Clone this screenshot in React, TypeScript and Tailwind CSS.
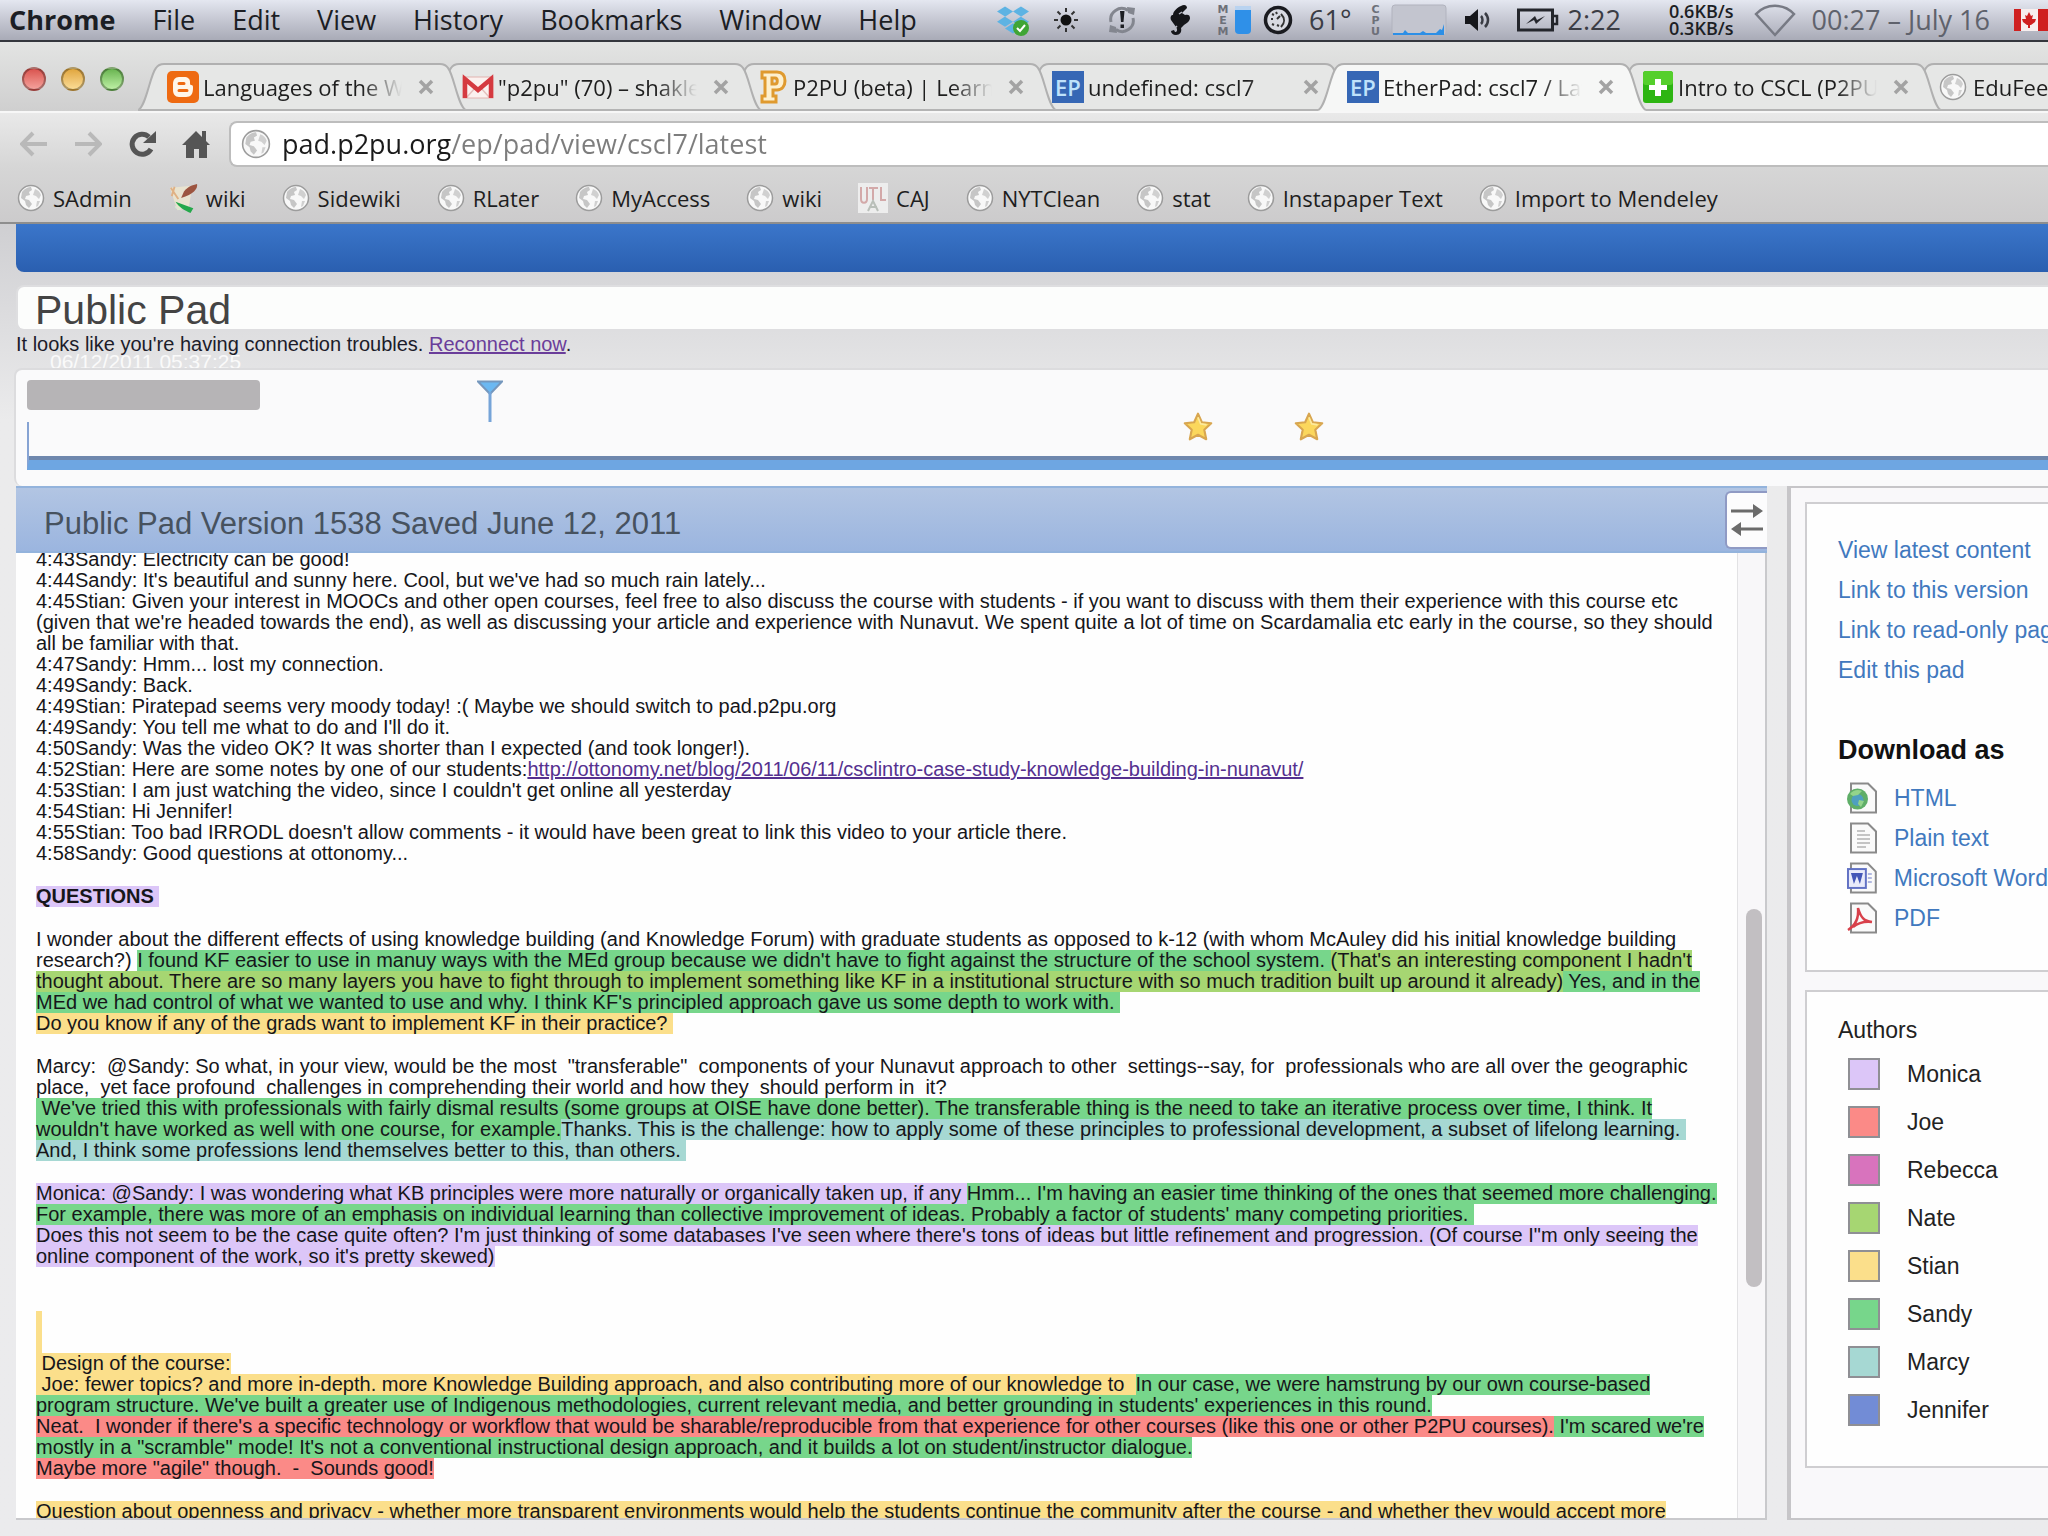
import type { ReactNode } from 'react'
import clsx from 'clsx'
import { FaDropbox } from 'react-icons/fa'

type Author = 'monica' | 'joe' | 'rebecca' | 'nate' | 'stian' | 'sandy' | 'marcy' | 'jennifer'

interface Run {
  text: string
  author?: Author
  bold?: boolean
  href?: string
}

const authorColor: Record<Author, string> = {
  monica: 'bg-[#dcc6f8]',
  joe: 'bg-[#fb8a87]',
  rebecca: 'bg-[#d873bd]',
  nate: 'bg-[#a6d672]',
  stian: 'bg-[#fbdf8b]',
  sandy: 'bg-[#77d68b]',
  marcy: 'bg-[#a6d8d3]',
  jennifer: 'bg-[#728cd6]',
}

const authors: { id: Author; name: string }[] = [
  { id: 'monica', name: 'Monica' },
  { id: 'joe', name: 'Joe' },
  { id: 'rebecca', name: 'Rebecca' },
  { id: 'nate', name: 'Nate' },
  { id: 'stian', name: 'Stian' },
  { id: 'sandy', name: 'Sandy' },
  { id: 'marcy', name: 'Marcy' },
  { id: 'jennifer', name: 'Jennifer' },
]

const plain = (text: string): Run[] => [{ text }]
const by = (author: Author, text: string): Run => ({ text, author })

const padLines: Run[][] = [
  plain('4:43Sandy: Electricity can be good!'),
  plain("4:44Sandy: It's beautiful and sunny here. Cool, but we've had so much rain lately..."),
  plain(
    '4:45Stian: Given your interest in MOOCs and other open courses, feel free to also discuss the course with students - if you want to discuss with them their experience with this course etc',
  ),
  plain(
    "(given that we're headed towards the end), as well as discussing your article and experience with Nunavut. We spent quite a lot of time on Scardamalia etc early in the course, so they should",
  ),
  plain('all be familiar with that.'),
  plain('4:47Sandy: Hmm... lost my connection.'),
  plain('4:49Sandy: Back.'),
  plain('4:49Stian: Piratepad seems very moody today! :( Maybe we should switch to pad.p2pu.org'),
  plain("4:49Sandy: You tell me what to do and I'll do it."),
  plain('4:50Sandy: Was the video OK? It was shorter than I expected (and took longer!).'),
  [
    { text: '4:52Stian: Here are some notes by one of our students:' },
    {
      text: 'http://ottonomy.net/blog/2011/06/11/csclintro-case-study-knowledge-building-in-nunavut/',
      href: 'http://ottonomy.net/blog/2011/06/11/csclintro-case-study-knowledge-building-in-nunavut/',
    },
  ],
  plain("4:53Stian: I am just watching the video, since I couldn't get online all yesterday"),
  plain('4:54Stian: Hi Jennifer!'),
  plain("4:55Stian: Too bad IRRODL doesn't allow comments - it would have been great to link this video to your article there."),
  plain('4:58Sandy: Good questions at ottonomy...'),
  [],
  [{ text: 'QUESTIONS ', author: 'monica', bold: true }],
  [],
  plain(
    'I wonder about the different effects of using knowledge building (and Knowledge Forum) with graduate students as opposed to k-12 (with whom McAuley did his initial knowledge building',
  ),
  [
    { text: 'research?) ' },
    by('sandy', "I found KF easier to use in manuy ways with the MEd group because we didn't have to fight against the structure of the school system. "),
    by('nate', "(That's an interesting component I hadn't"),
  ],
  [
    by('nate', 'thought about. There are so many layers you have to fight through to implement something like KF in a institutional structure with so much tradition built up around it already)'),
    by('sandy', ' Yes, and in the'),
  ],
  [by('sandy', "MEd we had control of what we wanted to use and why. I think KF's principled approach gave us some depth to work with. ")],
  [by('stian', 'Do you know if any of the grads want to implement KF in their practice? ')],
  [],
  plain(
    'Marcy:  @Sandy: So what, in your view, would be the most  "transferable"  components of your Nunavut approach to other  settings--say, for  professionals who are all over the geographic',
  ),
  plain('place,  yet face profound  challenges in comprehending their world and how they  should perform in  it?'),
  [
    by('sandy', " We've tried this with professionals with fairly dismal results (some groups at OISE have done better). The transferable thing is the need to take an iterative process over time, I think. It"),
  ],
  [
    by('sandy', "wouldn't have worked as well with one course, for example."),
    by('marcy', 'Thanks. This is the challenge: how to apply some of these principles to professional development, a subset of lifelong learning. '),
  ],
  [by('marcy', 'And, I think some professions lend themselves better to this, than others. ')],
  [],
  [
    by('monica', 'Monica: @Sandy: I was wondering what KB principles were more naturally or organically taken up, if any '),
    by('sandy', "Hmm... I'm having an easier time thinking of the ones that seemed more challenging."),
  ],
  [by('sandy', "For example, there was more of an emphasis on individual learning than collective improvement of ideas. Probably a factor of students' many competing priorities. ")],
  [by('monica', "Does this not seem to be the case quite often? I'm just thinking of some databases I've seen where there's tons of ideas but little refinement and progression. (Of course I\"m only seeing the")],
  [by('monica', "online component of the work, so it's pretty skewed)")],
  [],
  [],
  [by('stian', ' ')],
  [by('stian', ' ')],
  [by('stian', ' Design of the course:')],
  [
    by('stian', ' Joe: fewer topics? and more in-depth. more Knowledge Building approach, and also contributing more of our knowledge to  '),
    by('sandy', 'In our case, we were hamstrung by our own course-based'),
  ],
  [by('sandy', "program structure. We've built a greater use of Indigenous methodologies, current relevant media, and better grounding in students' experiences in this round.")],
  [
    by('joe', "Neat.  I wonder if there's a specific technology or workflow that would be sharable/reproducible from that experience for other courses (like this one or other P2PU courses)."),
    by('sandy', " I'm scared we're"),
  ],
  [by('sandy', 'mostly in a "scramble" mode! It\'s not a conventional instructional design approach, and it builds a lot on student/instructor dialogue.')],
  [by('joe', 'Maybe more "agile" though.  -  Sounds good!')],
  [],
  [by('stian', 'Question about openness and privacy - whether more transparent environments would help the students continue the community after the course - and whether they would accept more')],
]

/* ---------- icons ---------- */

const Globe = ({ className = 'size-7' }: { className?: string }) => (
  <svg viewBox="0 0 28 28" className={clsx('shrink-0', className)} aria-hidden="true">
    <circle cx="14" cy="14" r="12.5" fill="#f8f8f8" stroke="#9c9c9c" strokeWidth="1.500" />
    <path d="M5 8c3-4 7-5 9-5l1 3-3 2 1 3-4 1-1 3 4 1 3 4-3 4-3-3-1-4-4-3z" fill="#c6c6c6" />
    <path d="M18 5c3 1 5 3 6 6l-2 4-3-3-3-1zM20 17l3 0-2 5-2 1z" fill="#d0d0d0" />
  </svg>
)

const Star = () => (
  <svg viewBox="0 0 30 30" className="size-8" aria-hidden="true">
    <path
      d="M15 2.5l3.600 8 8.800 1-6.500 6 1.800 9L15 22.300 7.300 26.500l1.800-9-6.500-6 8.800-1z"
      fill="#fbd75c"
      stroke="#d8a650"
      strokeWidth="2"
      strokeLinejoin="round"
    />
    <path d="M15 6l2.500 6 5.500 1" fill="none" stroke="#fdeaa0" strokeWidth="1.500" />
  </svg>
)

const SunIcon = () => (
  <svg viewBox="0 0 26 26" className="size-[26px]" aria-hidden="true">
    <circle cx="13" cy="13" r="5.500" fill="#111" />
    <path
      d="M13 1v4M13 21v4M1 13h4M21 13h4M4.500 4.500l3 3M18.500 18.500l3 3M21.500 4.500l-3 3M7.500 18.500l-3 3"
      stroke="#333"
      strokeWidth="2"
    />
  </svg>
)

const SyncAlert = () => (
  <svg viewBox="0 0 30 30" className="size-[30px]" aria-hidden="true">
    <path d="M4 17A11 11 0 0 1 21 5.500M26 13A11 11 0 0 1 9 24.500" fill="none" stroke="#83868f" strokeWidth="3" />
    <path d="M20 2l8 1-1 7-6-2zM10 28l-8-1 1-7 6 2z" fill="#83868f" />
    <path d="M13 6h4.500l-1 11h-2.500zM13.500 19.500h3.500v3.500h-3.500z" fill="#1d1f24" />
  </svg>
)

const ScrollIcon = () => (
  <svg viewBox="0 0 22 32" className="h-8 w-[22px]" aria-hidden="true">
    <path
      d="M12 2c3-2 6-1 6 2l-5 5 3 2c3-1 5 0 5 3s-3 5-6 7l-3 3c1 4-1 7-5 7-3 0-5-2-5-4l3-1 1 2c2 0 3-2 1-5l-5-7c-1-3 0-5 2-5 0-4 5-8 8-9z"
      fill="#15161a"
    />
    <path d="M5 25l3-3M10 10l3-2" stroke="#b9bbc6" strokeWidth="1.500" />
  </svg>
)

const Gauge = () => (
  <svg viewBox="0 0 30 30" className="size-[30px]" aria-hidden="true">
    <circle cx="15" cy="15" r="12.500" fill="#d8dae2" stroke="#1a1b20" strokeWidth="3.500" />
    <path d="M9 9l2 1M8 14h2M9 19l2 1M13 7l1 2M18 9c4 4 4 9 0 13" fill="none" stroke="#333" strokeWidth="2" />
    <path d="M14 14l3-3M14 20l2 1" stroke="#333" strokeWidth="2" />
  </svg>
)

const CpuGraph = () => (
  <svg viewBox="0 0 56 32" className="h-8 w-14" aria-hidden="true">
    <rect x="1" y="1" width="54" height="30" rx="3" fill="#c3c5cf" stroke="#b1b3be" />
    <path d="M2 31v-2h10l2-3 3 3h12l3-2 3 2h10l4-4 2 1 2-6v11z" fill="#2c8fe6" />
  </svg>
)

const Speaker = () => (
  <svg viewBox="0 0 30 26" className="h-[26px] w-[30px]" aria-hidden="true">
    <path d="M2 9h5l8-7v22l-8-7H2z" fill="#16171b" />
    <path d="M18 9c2 2 2 6 0 8M22 6c4 4 4 10 0 14" fill="none" stroke="#3a3c44" strokeWidth="2.500" />
  </svg>
)

const Battery = () => (
  <svg viewBox="0 0 42 24" className="h-6 w-[42px]" aria-hidden="true">
    <rect x="1.500" y="2" width="34" height="20" fill="none" stroke="#24262c" strokeWidth="3" />
    <path d="M36 8h4v8h-4" fill="none" stroke="#24262c" strokeWidth="2.500" />
    <path d="M9 16l9-8 2 4 8-4-9 8-2-4z" fill="#24262c" />
  </svg>
)

const Wifi = () => (
  <svg viewBox="0 0 42 34" className="h-[34px] w-[42px]" aria-hidden="true">
    <path d="M2 11C12 0 30 0 40 11L21 32z" fill="none" stroke="#777a84" strokeWidth="2.500" />
  </svg>
)

const Flag = () => (
  <svg viewBox="0 0 44 22" className="h-[22px] w-11" aria-hidden="true">
    <rect width="44" height="22" fill="#f7eeee" />
    <rect width="7" height="22" fill="#cf2020" />
    <rect x="24" width="20" height="22" fill="#cf2020" />
    <path d="M15 3l2 4 2-1-1 4 4 0-1 3-4 3h-1v3h-2v-3h-1l-4-3-1-3 4 0-1-4 2 1z" fill="#cf2020" />
  </svg>
)

const Blogger = () => (
  <svg viewBox="0 0 32 32" className="size-8" aria-hidden="true">
    <rect width="32" height="32" rx="5" fill="#ee6a12" />
    <path d="M12 6h5c4 0 6 2 6 5 0 2 0 3 1 3 2 0 2 1 2 3 0 6-2 9-7 9h-7c-4 0-6-3-6-7v-6c0-4 2-7 6-7z" fill="#fff6ea" />
    <path d="M12 12.500h5M12 19.500h8" stroke="#ee6a12" strokeWidth="3" strokeLinecap="round" />
  </svg>
)

const Gmail = () => (
  <svg viewBox="0 0 32 32" className="size-8" aria-hidden="true">
    <rect x="1" y="6" width="30" height="21" fill="#fbf1ef" stroke="#e2b4b0" />
    <path d="M5 26l8-9M27 26l-8-9" stroke="#e5c0bd" strokeWidth="1.500" />
    <path d="M3 27V8l13 11L29 8v19" fill="none" stroke="#d53a40" strokeWidth="4.500" />
  </svg>
)

const P2pu = () => (
  <svg viewBox="0 0 28 34" className="h-[34px] w-7" aria-hidden="true">
    <path
      d="M3 2h15c6 0 8 4 8 9s-3 9-8 9h-4v6h3v6H3v-6h3V8H3zM13 8v6h3c3 0 3-6 0-6z"
      fill="#fdf0cf"
      stroke="#df9a2f"
      strokeWidth="3"
      fillRule="evenodd"
    />
  </svg>
)

const EtherPad = () => (
  <span className="flex h-8 w-8 items-center justify-center bg-[#3667b5] text-[22px] leading-8 font-semibold text-[#bfe2fb]">
    EP
  </span>
)

const Plus = () => (
  <svg viewBox="0 0 30 32" className="h-8 w-[30px]" aria-hidden="true">
    <rect width="30" height="32" rx="3" fill="#2db512" />
    <rect width="30" height="14" rx="3" fill="#55cf2c" />
    <path d="M12 8h6v6h6v5h-6v6h-6v-6H6v-5h6z" fill="#fff" />
  </svg>
)

const WikiIcon = () => (
  <svg viewBox="0 0 32 32" className="h-8 w-[30px] shrink-0" aria-hidden="true">
    <path d="M2 5l24-2-4 24-12 2z" fill="#e9e3cf" />
    <path d="M3 5l8 12M7 4l-3 10" stroke="#e0b184" strokeWidth="2" />
    <path d="M31 1c1 5-4 11-17 15l3-7c4-5 9-7 14-8z" fill="#9c5440" />
    <path d="M8 20l19 7-3 5C17 29 12 26 8 20z" fill="#25a84b" />
    <path d="M7 24l9 6-8-3z" fill="#d8ead4" />
  </svg>
)

const CajIcon = () => (
  <svg viewBox="0 0 30 30" className="size-[30px] shrink-0" aria-hidden="true">
    <rect width="30" height="30" fill="#ededed" />
    <path d="M3 4v12c0 5 6 5 6 0V4M11 5h9M15 5v12M23 4v13h5" fill="none" stroke="#d3a9a9" strokeWidth="2" />
    <path d="M10 28l5-10 5 10M12 24h7" fill="none" stroke="#b9bfb9" strokeWidth="2" />
  </svg>
)

const Page = ({ children }: { children?: ReactNode }) => (
  <svg viewBox="0 0 32 32" className="size-8" aria-hidden="true">
    <path d="M5 1.500h17l8 8v21H5z" fill="#fafafa" stroke="#8a8a8a" strokeWidth="2" />
    {children}
  </svg>
)

const HtmlIcon = () => (
  <Page>
    <circle cx="11.500" cy="17" r="10.500" fill="#5fae68" />
    <circle cx="11.500" cy="18" r="6" fill="#4f9fc0" />
    <path d="M4 12c3-4 8-5 12-3l-4 4-5 1zM13 18l5 1-3 6-3-3z" fill="#93d48b" />
  </Page>
)

const TextIcon = () => (
  <Page>
    <path d="M11 9h8M11 13h13M11 17h13M11 21h13M11 25h9" stroke="#b3b3b3" strokeWidth="1.500" />
  </Page>
)

const WordIcon = () => (
  <Page>
    <rect x="2" y="7" width="18" height="19" fill="#e9ebfa" stroke="#6272c4" strokeWidth="2" />
    <path d="M5 11l3 11 3-8 3 8 3-11z" fill="#4457b8" />
    <path d="M22 12h4M22 16h4M22 20h4" stroke="#9aa4d8" strokeWidth="1.500" />
  </Page>
)

const PdfIcon = () => (
  <Page>
    <path d="M2 28c8-5 11-12 10-22 3 10 6 13 14 14-8-1-14 1-19 5" fill="none" stroke="#d8404a" strokeWidth="2.500" />
  </Page>
)

/* ---------- browser chrome ---------- */

const menus = ['File', 'Edit', 'View', 'History', 'Bookmarks', 'Window', 'Help']

const Stacked = ({ text }: { text: string }) => (
  <span className="flex w-4 flex-col items-center font-['DejaVu_Sans',sans-serif] text-[11px] leading-[11px] font-bold text-[#6d7079]">
    {text.split('').map((c, i) => (
      <span key={i}>{c}</span>
    ))}
  </span>
)

const MenuBar = () => (
  <header className="flex h-[42px] shrink-0 items-center overflow-hidden border-b-2 border-[#34363d] bg-linear-to-b from-[#e4e7f0] via-[#c5c7d2] to-[#a9abb7] text-[27px] leading-8 text-[#1c1e24]">
    <nav className="flex w-[997px] shrink-0 gap-[37px] pl-[9px]">
      <button className="font-bold">Chrome</button>
      {menus.map((m) => (
        <button key={m}>{m}</button>
      ))}
    </nav>
    <div className="flex shrink-0 items-center whitespace-nowrap">
      <span className="relative">
        <FaDropbox className="size-8 text-[#5db3e3]" />
        <svg viewBox="0 0 16 16" className="absolute right-0 bottom-0 size-4" aria-hidden="true">
          <circle cx="8" cy="8" r="8" fill="#3fa535" />
          <path d="M4 8l3 3 5-6" fill="none" stroke="#fff" strokeWidth="2" />
        </svg>
      </span>
      <span className="ml-6"><SunIcon /></span>
      <span className="ml-7"><SyncAlert /></span>
      <span className="ml-8"><ScrollIcon /></span>
      <span className="ml-6"><Stacked text="MEM" /></span>
      <span className="ml-1 h-7 w-4 rounded-b border-t-4 border-[#b9d3f0] bg-[#2f90e8]" />
      <span className="ml-3"><Gauge /></span>
      <span className="ml-4 text-[#3b3d45]">61°</span>
      <span className="ml-4"><Stacked text="CPU" /></span>
      <span className="ml-2"><CpuGraph /></span>
      <span className="ml-4"><Speaker /></span>
      <span className="ml-6"><Battery /></span>
      <span className="ml-2 text-[#3b3d45]">2:22</span>
      <span className="ml-12 flex flex-col text-[18px] leading-[17px] font-semibold">
        <span>0.6KB/s</span>
        <span>0.3KB/s</span>
      </span>
      <span className="ml-5"><Wifi /></span>
      <span className="ml-4 text-[#5f626c]">00:27 – July 16</span>
      <span className="ml-6"><Flag /></span>
    </div>
  </header>
)

const tabs: { title: string; icon: ReactNode; active?: boolean }[] = [
  { title: 'Languages of the W', icon: <Blogger /> },
  { title: '"p2pu" (70) – shakle', icon: <Gmail /> },
  { title: 'P2PU (beta) | Learnin', icon: <P2pu /> },
  { title: 'undefined: cscl7', icon: <EtherPad /> },
  { title: 'EtherPad: cscl7 / Lat', icon: <EtherPad />, active: true },
  { title: 'Intro to CSCL (P2PU', icon: <Plus /> },
  { title: 'EduFeedr', icon: <Globe /> },
]

const Tab = ({ title, icon, active, order }: { title: string; icon: ReactNode; active?: boolean; order: number }) => (
  <div className="relative -mr-[33px] flex h-12 w-[328px] shrink-0 items-center pr-8 pl-[29px]" style={{ zIndex: active ? 20 : order }}>
    <svg viewBox="0 0 328 48" className="absolute inset-0 h-12 w-[328px]" aria-hidden="true">
      <path
        d="M0 47C8 44 12 12 18 5C20 2 22 1 26 1H302C306 1 308 2 310 5C316 12 320 44 328 47V48H0z"
        fill={active ? '#f6f7f6' : '#e6e7e6'}
      />
      <path
        d="M0 47C8 44 12 12 18 5C20 2 22 1 26 1H302C306 1 308 2 310 5C316 12 320 44 328 47"
        fill="none"
        stroke="#b0b0b0"
        strokeWidth="2"
      />
      {!active && <path d="M0 47H328" stroke="#b4b4b4" strokeWidth="2" />}
    </svg>
    <span className="relative flex w-8 shrink-0 justify-center">{icon}</span>
    <button className="relative ml-1 flex-1 overflow-hidden mask-r-from-80% text-left text-[22px] leading-8 whitespace-nowrap text-[#1e1e1e]">
      {title}
    </button>
    <button aria-label="Close tab" className="relative ml-4">
      <svg viewBox="0 0 16 16" className="size-4" aria-hidden="true">
        <path d="M2 2l12 12M14 2L2 14" stroke="#a3a3a3" strokeWidth="3.500" />
      </svg>
    </button>
  </div>
)

const TrafficLight = ({ color }: { color: string }) => (
  <span className={clsx('size-6 rounded-full border-2 border-black/30 bg-linear-to-b', color)} />
)

const TabStrip = () => (
  <div className="flex h-[69px] shrink-0 items-end overflow-hidden bg-linear-to-b from-[#e3e4e3] to-[#cfcfcf]">
    <div className="flex w-[138px] shrink-0 gap-[15px] self-center pt-1 pl-[22px]">
      <TrafficLight color="from-[#d9534f] to-[#f4a19c]" />
      <TrafficLight color="from-[#e0a63c] to-[#fbdc94]" />
      <TrafficLight color="from-[#69b450] to-[#bdf0a4]" />
    </div>
    {tabs.map((tab, i) => (
      <Tab key={i} {...tab} order={tabs.length - i} />
    ))}
  </div>
)

const Toolbar = () => (
  <div className="flex h-[56px] shrink-0 items-center border-t-2 border-[#f7f7f7] bg-linear-to-b from-[#e9e9e9] to-[#d6d6d6] pt-2">
    <div className="flex w-[229px] shrink-0 items-center gap-[26px] pl-5">
      <button aria-label="Back">
        <svg viewBox="0 0 28 28" className="size-7" aria-hidden="true">
          <path d="M27 14H3M13 3L2 14l11 11" fill="none" stroke="#b9b9b9" strokeWidth="4" />
        </svg>
      </button>
      <button aria-label="Forward">
        <svg viewBox="0 0 28 28" className="size-7" aria-hidden="true">
          <path d="M1 14h24M15 3l11 11-11 11" fill="none" stroke="#b9b9b9" strokeWidth="4" />
        </svg>
      </button>
      <button aria-label="Reload">
        <svg viewBox="0 0 28 28" className="size-7" aria-hidden="true">
          <path d="M23 19A10 10 0 1 1 21 7" fill="none" stroke="#555" strokeWidth="5" />
          <path d="M28 1v12H15z" fill="#555" />
        </svg>
      </button>
      <button aria-label="Home">
        <svg viewBox="0 0 28 28" className="size-7" aria-hidden="true">
          <path d="M14 1L0 15h4v13h8v-9h5v9h8V15h3l-4-4V1h-4v6z" fill="#555" />
        </svg>
      </button>
    </div>
    <div className="flex h-[46px] flex-1 items-center rounded-l-lg border-2 border-r-0 border-[#bdbdbd] bg-white pl-[10px]">
      <Globe className="size-[30px]" />
      {/* host is dark, the path is grey */}
      <input
        aria-label="Address"
        defaultValue="pad.p2pu.org/ep/pad/view/cscl7/latest"
        className="ml-[11px] h-10 flex-1 bg-[linear-gradient(to_right,#1a1a1a_169px,#7d7d7d_169px)] bg-clip-text text-[27px] text-transparent outline-none"
      />
    </div>
  </div>
)

const bookmarks: { name: string; icon?: ReactNode }[] = [
  { name: 'SAdmin' },
  { name: 'wiki', icon: <WikiIcon /> },
  { name: 'Sidewiki' },
  { name: 'RLater' },
  { name: 'MyAccess' },
  { name: 'wiki' },
  { name: 'CAJ', icon: <CajIcon /> },
  { name: 'NYTClean' },
  { name: 'stat' },
  { name: 'Instapaper Text' },
  { name: 'Import to Mendeley' },
]

const BookmarksBar = () => (
  <nav className="flex h-[57px] shrink-0 items-center gap-9 border-b-2 border-[#8e8e8e] bg-linear-to-b from-[#d6d6d6] to-[#cccbcc] pt-[6px] pl-[17px] text-[22px] leading-8 text-[#1e1e1e]">
    {bookmarks.map((b, i) => (
      <a key={i} href="#" className="flex items-center gap-2 whitespace-nowrap">
        {b.icon ?? <Globe />}
        {b.name}
      </a>
    ))}
  </nav>
)

/* ---------- pad page ---------- */

const Timeline = () => (
  <section className="relative ml-[14px] h-[118px] shrink-0 rounded-l-lg border-t-2 border-l-2 border-[#dcdcde] bg-[#fafafb] pt-[10px] pl-[11px]">
    <div className="h-[30px] w-[233px] rounded bg-[#b6b4b6]" />
    <div className="mt-3 h-[48px] border-b-[10px] border-l-2 border-b-[#6ea6e2] border-l-[#86a3d3]">
      <div className="h-full border-b-4 border-[#6e87ad]" />
    </div>
    <svg viewBox="0 0 26 42" className="absolute top-[10px] left-[461px] h-[42px] w-[26px]" aria-hidden="true">
      <path d="M1 1.500h24L13 14z" fill="#6bb8f2" stroke="#7597bd" strokeWidth="2" />
      <path d="M13 12v30" stroke="#76a4d8" strokeWidth="3" />
    </svg>
    <button aria-label="Saved revision" className="absolute top-[41px] left-[1166px]"><Star /></button>
    <button aria-label="Saved revision" className="absolute top-[41px] left-[1277px]"><Star /></button>
  </section>
)

const PadLine = ({ runs }: { runs: Run[] }) => {
  if (runs.length === 0) return <div className="h-[22px]" />

  return (
    <p className="flex h-[21px]">
      {runs.map((run, i) =>
        run.href ? (
          <a key={i} href={run.href} className="text-[#55308f] underline">
            {run.text}
          </a>
        ) : (
          <span key={i} className={clsx(run.author && authorColor[run.author], run.bold && 'font-bold')}>
            {run.text}
          </span>
        ),
      )}
    </p>
  )
}

const PadView = () => (
  <main className="ml-4 flex min-w-0 flex-1 flex-col">
    <div className="flex h-[67px] shrink-0 items-center justify-between border-t-2 border-b-2 border-[#93b3dc] bg-linear-to-b from-[#b2c5e3] to-[#9bb5df] pl-7">
      <h2 className="pt-2 text-[31px] leading-9 text-[#47525f]">Public Pad Version 1538 Saved June 12, 2011</h2>
      <button
        aria-label="Toggle view"
        className="flex h-[58px] w-[42px] items-center justify-center rounded-l-md border-2 border-r-0 border-[#8f9ac4] bg-[#fcfcfd]"
      >
        <svg viewBox="0 0 32 34" className="h-[34px] w-8" aria-hidden="true">
          <path d="M0 8h28M4 26h28" stroke="#6b6b6b" strokeWidth="3" />
          <path d="M22 1l10 7-10 7zM10 19L0 26l10 7z" fill="#6b6b6b" />
        </svg>
      </button>
    </div>
    <div className="flex min-h-0 flex-1 border-r-2 border-b-2 border-[#c9c9cc] bg-[#fefefe]">
      <div className="-mt-1 min-w-0 flex-1 overflow-hidden pl-5 text-[20px] leading-[21px] whitespace-pre text-[#16161a] [clip-path:inset(4px_0_0_0)]">
        {padLines.map((runs, i) => (
          <PadLine key={i} runs={runs} />
        ))}
      </div>
      <div className="w-[28px] shrink-0 border-l border-[#e2e2e4] bg-[#f8f7f9] pt-[356px] pl-2">
        <div className="h-[378px] w-4 rounded-full bg-[#c2bfc2]" />
      </div>
    </div>
  </main>
)

const downloads = [
  { name: 'HTML', icon: <HtmlIcon /> },
  { name: 'Plain text', icon: <TextIcon /> },
  { name: 'Microsoft Word', icon: <WordIcon /> },
  { name: 'PDF', icon: <PdfIcon /> },
]

const Sidebar = () => (
  <aside className="ml-5 flex w-[261px] shrink-0 flex-col gap-[18px] overflow-hidden border-t-2 border-b-2 border-l-4 border-[#c6c5c8] bg-[#f9f8fa] pt-[14px] pl-[14px] text-[23px] leading-10 whitespace-nowrap">
    <section className="border-2 border-r-0 border-[#cfced1] bg-[#fefefe] pt-[26px] pb-8 pl-[31px] text-[#4179be]">
      {['View latest content', 'Link to this version', 'Link to read-only page', 'Edit this pad'].map((l) => (
        <a key={l} href="#" className="block">
          {l}
        </a>
      ))}
      <h3 className="mt-10 mb-2 text-[27px] font-bold text-[#111]">Download as</h3>
      {downloads.map((d) => (
        <a key={d.name} href="#" className="flex items-center gap-4 pl-2">
          {d.icon}
          {d.name}
        </a>
      ))}
    </section>
    <section className="border-2 border-r-0 border-[#cfced1] bg-[#fefefe] pt-[18px] pb-8 pl-[31px] text-[#222]">
      <h3>Authors</h3>
      <ul>
        {authors.map((a) => (
          <li key={a.id} className="flex h-12 items-center gap-[27px] pl-[10px]">
            <span className={clsx('size-8 border-2 border-[#8f8f94]', authorColor[a.id])} />
            {a.name}
          </li>
        ))}
      </ul>
    </section>
  </aside>
)

export default function App() {
  return (
    <div className="flex h-screen flex-col overflow-hidden bg-[#ebebed] font-['Open_Sans','Noto_Sans',sans-serif]">
      <MenuBar />
      <TabStrip />
      <Toolbar />
      <BookmarksBar />
      <div className="flex min-h-0 flex-1 flex-col bg-linear-to-b from-[#cfcfd2] via-[#ebebec] via-15% to-[#ebebed] font-['Liberation_Sans',Arial,sans-serif]">
        <div className="ml-4 h-12 shrink-0 rounded-bl-lg bg-linear-to-b from-[#3b76ca] to-[#2a5fb0]" />
        <h1 className="mt-[13px] ml-4 h-[46px] shrink-0 rounded-l-lg border-2 border-r-0 border-[#dedee0] bg-[#fcfdfc] pl-[17px] text-[41px] leading-[46px] text-[#444]">
          Public Pad
        </h1>
        <p className="ml-4 h-5 shrink-0 text-[20px] leading-[26px] text-[#1c1c2a]">
          It looks like you're having connection troubles.{' '}
          <a href="#" className="text-[#6a3d9a] underline">
            Reconnect now
          </a>
          .
        </p>
        <p className="h-[17px] shrink-0 overflow-hidden pl-[50px] text-[21px] leading-[22px] text-[#fafafa]">06/12/2011 05:37:25</p>
        <Timeline />
        <div className="flex min-h-0 flex-1 pb-4">
          <PadView />
          <Sidebar />
        </div>
      </div>
    </div>
  )
}
